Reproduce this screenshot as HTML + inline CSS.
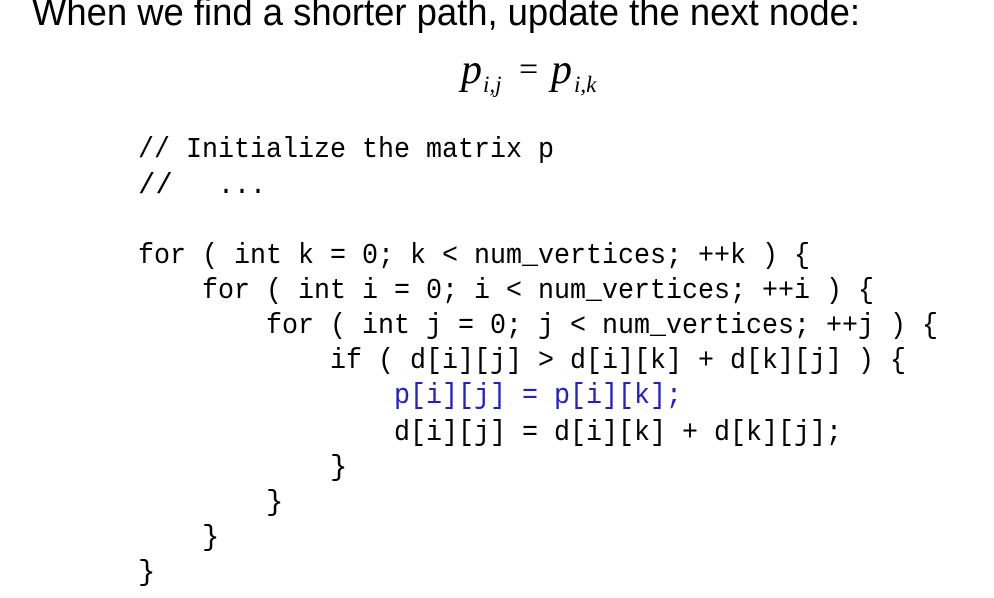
<!DOCTYPE html>
<html><head><meta charset="utf-8"><style>
html,body{margin:0;padding:0;background:#fff;width:994px;height:598px;overflow:hidden}
svg{display:block}
.c text{font-family:"Liberation Mono",monospace;font-size:29px;fill:#000;white-space:pre}
</style></head><body>
<svg width="994" height="598" xmlns="http://www.w3.org/2000/svg">
<text x="32" y="25" font-family="Liberation Sans, sans-serif" font-size="38" textLength="828" lengthAdjust="spacingAndGlyphs">When we find a shorter path, update the next node:</text>
<g font-family="Liberation Serif, serif" font-style="italic">
<text x="461" y="83" font-size="42">p</text>
<text x="483" y="92" font-size="23">i,j</text>
<text x="519" y="80" font-size="34" font-style="normal">=</text>
<text x="551" y="83" font-size="42">p</text>
<text x="574" y="92" font-size="23">i,k</text>
</g>
<g class="c" xml:space="preserve">
<text x="138" y="157" textLength="416" lengthAdjust="spacingAndGlyphs">// Initialize the matrix p</text>
<text x="138" y="193">//</text>
<text x="218" y="193" textLength="48" lengthAdjust="spacingAndGlyphs">...</text>
<text x="138" y="263" textLength="672" lengthAdjust="spacingAndGlyphs">for ( int k = 0; k &lt; num_vertices; ++k ) {</text>
<text x="202" y="298" textLength="672" lengthAdjust="spacingAndGlyphs">for ( int i = 0; i &lt; num_vertices; ++i ) {</text>
<text x="266" y="333" textLength="672" lengthAdjust="spacingAndGlyphs">for ( int j = 0; j &lt; num_vertices; ++j ) {</text>
<text x="330" y="368" textLength="576" lengthAdjust="spacingAndGlyphs">if ( d[i][j] &gt; d[i][k] + d[k][j] ) {</text>
<text x="394" y="403" textLength="288" lengthAdjust="spacingAndGlyphs" style="fill:#2020d0">p[i][j] = p[i][k];</text>
<text x="394" y="440" textLength="448" lengthAdjust="spacingAndGlyphs">d[i][j] = d[i][k] + d[k][j];</text>
<text x="330" y="475">}</text>
<text x="266" y="510">}</text>
<text x="202" y="545">}</text>
<text x="138" y="580">}</text>
</g>
</svg>
</body></html>
